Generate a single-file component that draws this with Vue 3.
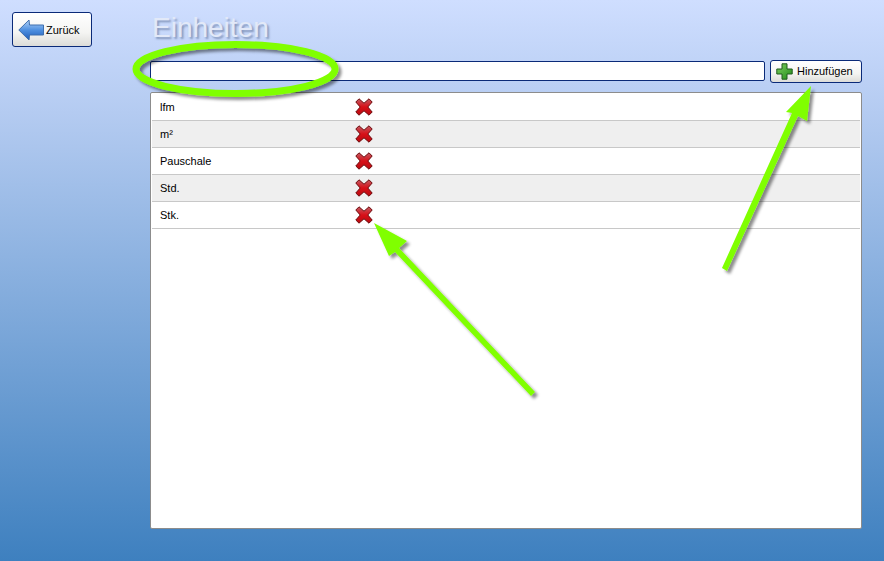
<script setup>
const rows = ['lfm', 'm²', 'Pauschale', 'Std.', 'Stk.']
</script>

<template>
  <div class="page">
    <aside class="side">
      <button class="btn back">
        <svg width="27" height="22" viewBox="0 0 27 22">
          <defs>
            <linearGradient id="ba" x1="0" y1="0" x2="0" y2="1">
              <stop offset="0" stop-color="#b4d4f8" />
              <stop offset="0.5" stop-color="#4f90e0" />
              <stop offset="1" stop-color="#1f5cb8" />
            </linearGradient>
          </defs>
          <path d="M0.8 11 L11 1 L11.5 6 L25.5 6 L25.5 16 L11.5 16 L11 21 Z" fill="url(#ba)" stroke="#3f6fae" stroke-width="1" stroke-linejoin="round" />
        </svg>
        <span>Zurück</span>
      </button>
    </aside>
    <main class="main">
      <h1 class="title">Einheiten</h1>
      <div class="bar">
        <input class="field" type="text" />
        <button class="btn add">
          <svg width="17" height="17" viewBox="0 0 17 17">
            <defs>
              <linearGradient id="pl" x1="0" y1="0" x2="1" y2="1">
                <stop offset="0" stop-color="#7fd060" />
                <stop offset="1" stop-color="#1f8a18" />
              </linearGradient>
            </defs>
            <path d="M6 .8h5v5.2h5.2v5H11v5.2H6V11H.8V6H6z" fill="url(#pl)" stroke="#1f5a1c" stroke-width="1" stroke-linejoin="round" />
          </svg>
          <span>Hinzufügen</span>
        </button>
      </div>
      <div class="list">
        <div v-for="r in rows" :key="r" class="row">
          <span class="name">{{ r }}</span>
          <svg class="del" width="18" height="18" viewBox="0 0 18 18">
            <defs>
              <linearGradient :id="'x' + r" x1="0" y1="0" x2="0" y2="1">
                <stop offset="0" stop-color="#c05c64" />
                <stop offset="0.5" stop-color="#d81018" />
                <stop offset="1" stop-color="#b80a10" />
              </linearGradient>
            </defs>
            <path d="M4 .8 9 5.2 14 .8 17.2 4 12.8 9 17.2 14 14 17.2 9 12.8 4 17.2 .8 14 5.2 9 .8 4Z" :fill="`url(#x${r})`" stroke="#6c0a0c" stroke-width="1" stroke-linejoin="round" />
          </svg>
        </div>
      </div>
    </main>

    <svg class="marks" width="884" height="561" viewBox="0 0 884 561">
      <defs>
        <filter id="sh" x="-20%" y="-20%" width="140%" height="140%">
          <feDropShadow dx="3" dy="3" stdDeviation="1.6" flood-color="#000" flood-opacity="0.45" />
        </filter>
      </defs>
      <g filter="url(#sh)" fill="#80ff00">
        <ellipse cx="235.5" cy="69" rx="99.5" ry="24.5" fill="none" stroke="#80ff00" stroke-width="7" />
        <path d="M374 223 407 241 399 248 535 392 531 396 395 252 389 256Z" />
        <path d="M811 86 807 121 798 116 727 271 722 268 792 113 786 112Z" />
      </g>
    </svg>
  </div>
</template>

<style scoped>
.page {
  position: relative;
  display: flex;
  width: 884px;
  height: 561px;
  overflow: hidden;
  background: linear-gradient(#cfdeff 0%, #b4cbf1 20%, #3e80bf 100%);
  font-family: "Liberation Sans", Arial, sans-serif;
  font-size: 11px;
  color: #000;
}
.side {
  width: 150px;
  flex: none;
  padding: 12px 0 0 12px;
  box-sizing: border-box;
}
.btn {
  display: flex;
  align-items: center;
  box-sizing: border-box;
  padding: 0;
  border: 1px solid #0a2a78;
  border-radius: 3px;
  background: linear-gradient(#ffffff, #f4f4f2 60%, #dcdcd8);
  font: inherit;
  color: #000;
}
.back {
  width: 80px;
  height: 35px;
  padding-left: 5px;
  gap: 1px;
}
.main {
  width: 712px;
  flex: none;
}
.title {
  margin: 0;
  height: 59px;
  padding: 13px 0 0 2px;
  box-sizing: border-box;
  font-size: 28px;
  font-weight: 400;
  line-height: 30px;
  color: #e2e9f8;
  text-shadow: 2px 2px 2px rgba(70, 90, 130, 0.5);
}
.bar {
  display: flex;
  align-items: center;
  gap: 5px;
  height: 24px;
}
.field {
  width: 615px;
  height: 20px;
  box-sizing: border-box;
  border: 1px solid #0a2a78;
  border-radius: 2px;
  background: #fff;
  padding: 0;
  outline: none;
}
.add {
  width: 92px;
  height: 23px;
  padding-left: 5px;
  gap: 4px;
}
.list {
  box-sizing: border-box;
  margin-top: 9px;
  height: 437px;
  padding: 1px 1px 0;
  background: #fff;
  border: 1px solid #8c8c8c;
  border-radius: 2px;
}
.row {
  display: flex;
  align-items: center;
  height: 27px;
  box-sizing: border-box;
  border-bottom: 1px solid #c8c8c8;
}
.row:nth-child(even) {
  background: #efefef;
}
.name {
  width: 203px;
  padding-left: 8px;
  box-sizing: border-box;
}
.del {
  display: block;
}
.marks {
  position: absolute;
  left: 0;
  top: 0;
  pointer-events: none;
}
</style>
